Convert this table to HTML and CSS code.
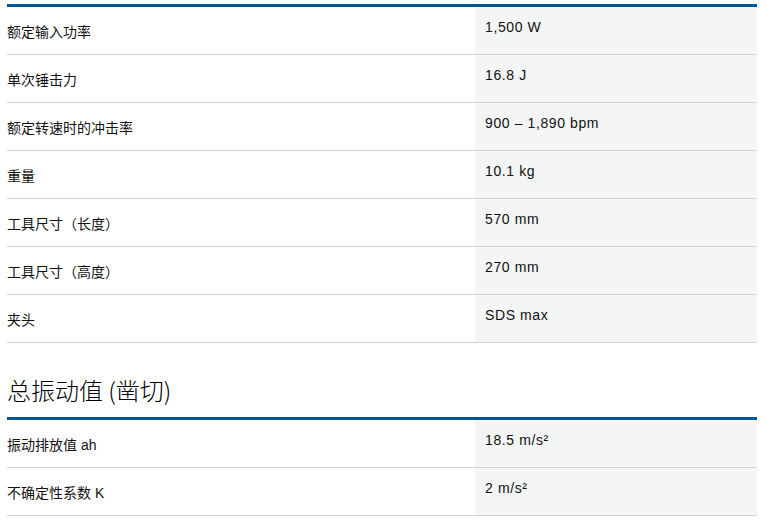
FILE: index.html
```html
<!DOCTYPE html>
<html lang="zh">
<head>
<meta charset="utf-8">
<link rel="stylesheet" href="styles.css">
</head>
<body>
<div class="page">
  <div class="table">
    <div class="row"><div class="label">额定输入功率</div><div class="value">1,500 W</div></div>
    <div class="row"><div class="label">单次锤击力</div><div class="value">16.8 J</div></div>
    <div class="row"><div class="label">额定转速时的冲击率</div><div class="value">900 – 1,890 bpm</div></div>
    <div class="row"><div class="label">重量</div><div class="value">10.1 kg</div></div>
    <div class="row"><div class="label">工具尺寸（长度）</div><div class="value">570 mm</div></div>
    <div class="row"><div class="label">工具尺寸（高度）</div><div class="value">270 mm</div></div>
    <div class="row"><div class="label">夹头</div><div class="value">SDS max</div></div>
  </div>
  <h2 class="heading">总振动值 (凿切)</h2>
  <div class="table">
    <div class="row"><div class="label">振动排放值 ah</div><div class="value">18.5 m/s²</div></div>
    <div class="row"><div class="label">不确定性系数 K</div><div class="value">2 m/s²</div></div>
  </div>
</div>
</body>
</html>
```
FILE: styles.css
```css
html, body {
  margin: 0;
  padding: 0;
  background: #fff;
}
body {
  font-family: "Liberation Sans", "Noto Sans CJK SC", sans-serif;
  color: #000;
  font-size: 14px;
}
.page {
  width: 750px;
  margin-left: 7px;
  padding-top: 4px;
}
.table {
  border-top: 3px solid #005691;
  display: flex;
  flex-direction: column;
}
.row {
  display: flex;
  height: 47px;
  border-bottom: 1px solid #d3d3d3;
}
.label {
  width: 468px;
  display: flex;
  align-items: center;
  padding-top: 1px;
  font-family: "Liberation Sans", "Noto Sans CJK SC", sans-serif;
  font-size: 14px;
  color: #111;
}
.value {
  flex: 1;
  background: #f4f5f5;
  padding: 10px 0 0 10px;
  line-height: 20px;
  font-size: 14px;
  letter-spacing: 0.6px;
  color: #111;
}
.heading {
  margin: 0;
  height: 74px;
  box-sizing: border-box;
  padding-top: 31px;
  font-family: "Noto Sans CJK SC", sans-serif;
  font-weight: 300;
  font-size: 24px;
  line-height: 32px;
}
```
